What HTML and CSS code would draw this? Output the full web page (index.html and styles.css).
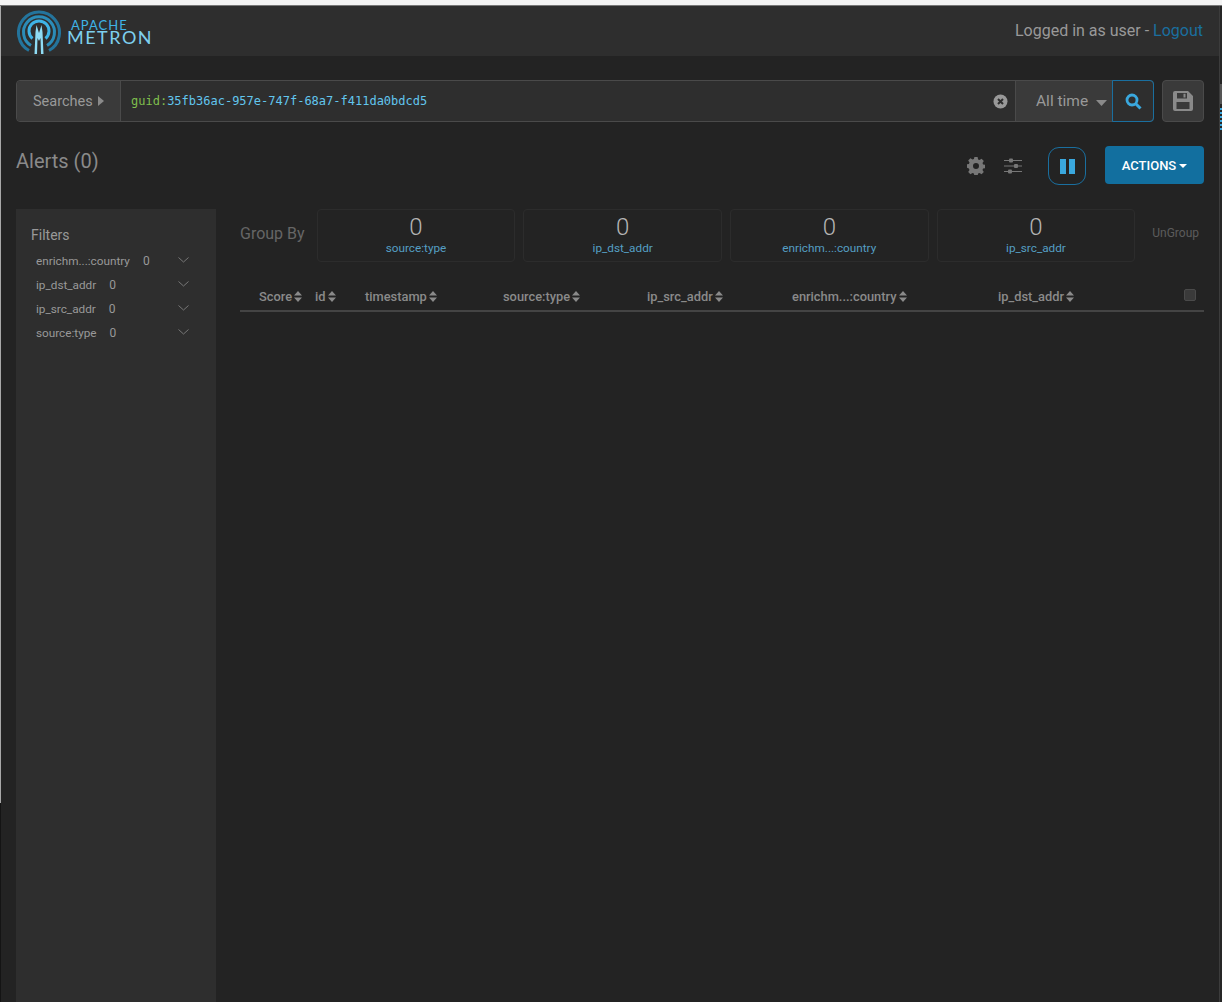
FILE: index.html
```html
<!DOCTYPE html>
<html lang="en">
<head>
<meta charset="utf-8">
<title>Apache Metron Alerts</title>
<link rel="stylesheet" href="styles.css">
</head>
<body>
<div class="chrome-top"></div>
<div class="edge-left"></div>
<div class="edge-right"><span class="edge-thumb"></span><span class="edge-dots"></span></div>
<header class="topbar">
  <div class="brand">
    <svg class="logo" width="46" height="46" viewBox="0 0 46 46" aria-hidden="true">
      <g fill="none" stroke-linecap="butt">
        <path d="M12 41.500A20.500 20.500 0 1 1 32 41.500" stroke="#24749c" stroke-width="3"/>
        <path d="M14 36.500A15.500 15.500 0 1 1 30 36.500" stroke="#2b8cb8" stroke-width="3"/>
        <path d="M15.500 29.500A10 10 0 1 1 28.500 29.500" stroke="#3fb4e6" stroke-width="3"/>
      </g>
      <path d="M17.500 45L18.500 23L19.500 16L22 24L24.500 16L25.500 23L26.500 45H24L23.500 29L22 32L20.500 29L20 45Z" fill="#8fdcf4"/>
    </svg>
    <div class="wordmark">
      <span class="apache">APACHE</span>
      <span class="metron">METRON</span>
    </div>
  </div>
  <div class="user">Logged in as user - <a class="logout">Logout</a></div>
</header>

<section class="search-row">
  <div class="search">
    <div class="searches">Searches <svg width="6" height="12" viewBox="0 0 6 12"><path d="M0 1l6 5-6 5z" fill="#8a8a8a"/></svg></div>
    <div class="query"><span class="q-key">guid:</span><span class="q-val">35fb36ac-957e-747f-68a7-f411da0bdcd5</span></div>
    <svg class="clear" width="15" height="15" viewBox="0 0 15 15"><circle cx="7.500" cy="7.500" r="7" fill="#999"/><path d="M5 5l5 5M10 5l-5 5" stroke="#2e2e2e" stroke-width="2"/></svg>
    <div class="time">All time <svg class="caret" width="11" height="6" viewBox="0 0 11 6"><path d="M0 0h11L5.500 6z" fill="#8a8a8a"/></svg></div>
    <div class="go">
      <svg width="17" height="17" viewBox="0 0 17 17"><circle cx="7" cy="7" r="5" fill="none" stroke="#3aa8de" stroke-width="2.800"/><path d="M10.500 10.500L15.500 15.500" stroke="#3aa8de" stroke-width="3"/></svg>
    </div>
  </div>
  <div class="save">
    <svg width="20" height="20" viewBox="0 0 20 20"><path fill-rule="evenodd" d="M2 0h13l5 5v13a2 2 0 0 1-2 2H2a2 2 0 0 1-2-2V2a2 2 0 0 1 2-2zM4 2v5.500h10V2zM10.500 2.800h2v3.800h-2zM3.500 11v7h13v-7z" fill="#8a8a8a"/></svg>
  </div>
</section>

<section class="title-row">
  <h1 class="title">Alerts (0)</h1>
  <div class="tools">
    <svg class="gear" width="18" height="18" viewBox="0 0 18 18"><path fill-rule="evenodd" d="M7.400 0h3.200l.5 2.400 1.400.6 2.100-1.300 2.200 2.200-1.300 2.100.6 1.400 2.400.5v3.200l-2.400.5-.6 1.400 1.300 2.100-2.200 2.200-2.100-1.300-1.400.6-.5 2.400H7.400l-.5-2.400-1.400-.6-2.100 1.300-2.200-2.200 1.300-2.100-.6-1.400L-.5 10.600V7.400l2.400-.5.600-1.400L1.200 3.400l2.200-2.200 2.100 1.300 1.400-.6zM9 6a3 3 0 1 0 0 6 3 3 0 0 0 0-6z" fill="#777"/></svg>
    <svg class="sliders" width="18" height="16" viewBox="0 0 18 16"><path d="M0 2.500h18M0 8h18M0 13.500h18" stroke="#777" stroke-width="1"/><rect x="5" y="0.500" width="4" height="4" rx="1" fill="#777"/><rect x="10" y="6" width="4" height="4" rx="1" fill="#777"/><rect x="4" y="11.500" width="4" height="4" rx="1" fill="#777"/></svg>
    <div class="pause"><span class="bar"></span><span class="bar"></span></div>
    <div class="actions">ACTIONS <span class="actions-caret"></span></div>
  </div>
</section>

<main class="main">
  <aside class="filters">
    <h2 class="filters-title">Filters</h2>
    <div class="filter"><span class="f-name">enrichm...:country</span><span class="f-count">0</span><svg class="chev" width="11" height="6" viewBox="0 0 11 6"><path d="M.5.500l5 4.500 5-4.500" fill="none" stroke="#777"/></svg></div>
    <div class="filter"><span class="f-name">ip_dst_addr</span><span class="f-count">0</span><svg class="chev" width="11" height="6" viewBox="0 0 11 6"><path d="M.5.500l5 4.500 5-4.500" fill="none" stroke="#777"/></svg></div>
    <div class="filter"><span class="f-name">ip_src_addr</span><span class="f-count">0</span><svg class="chev" width="11" height="6" viewBox="0 0 11 6"><path d="M.5.500l5 4.500 5-4.500" fill="none" stroke="#777"/></svg></div>
    <div class="filter"><span class="f-name">source:type</span><span class="f-count">0</span><svg class="chev" width="11" height="6" viewBox="0 0 11 6"><path d="M.5.500l5 4.500 5-4.500" fill="none" stroke="#777"/></svg></div>
  </aside>
  <div class="content">
    <div class="group-row">
      <div class="group-label">Group By</div>
      <div class="group-cards">
        <div class="card"><div class="card-num">0</div><div class="card-name">source:type</div></div>
        <div class="card"><div class="card-num">0</div><div class="card-name">ip_dst_addr</div></div>
        <div class="card"><div class="card-num">0</div><div class="card-name">enrichm...:country</div></div>
        <div class="card"><div class="card-num">0</div><div class="card-name">ip_src_addr</div></div>
      </div>
      <div class="ungroup">UnGroup</div>
    </div>
    <div class="table-head">
      <div class="th">Score <svg class="sort" width="8" height="11" viewBox="0 0 8 11"><path d="M0 4.500L4 0l4 4.500zM0 6.500h8L4 11z" fill="#8a8a8a"/></svg></div>
      <div class="th">id <svg class="sort" width="8" height="11" viewBox="0 0 8 11"><path d="M0 4.500L4 0l4 4.500zM0 6.500h8L4 11z" fill="#8a8a8a"/></svg></div>
      <div class="th">timestamp <svg class="sort" width="8" height="11" viewBox="0 0 8 11"><path d="M0 4.500L4 0l4 4.500zM0 6.500h8L4 11z" fill="#8a8a8a"/></svg></div>
      <div class="th">source:type <svg class="sort" width="8" height="11" viewBox="0 0 8 11"><path d="M0 4.500L4 0l4 4.500zM0 6.500h8L4 11z" fill="#8a8a8a"/></svg></div>
      <div class="th">ip_src_addr <svg class="sort" width="8" height="11" viewBox="0 0 8 11"><path d="M0 4.500L4 0l4 4.500zM0 6.500h8L4 11z" fill="#8a8a8a"/></svg></div>
      <div class="th">enrichm...:country <svg class="sort" width="8" height="11" viewBox="0 0 8 11"><path d="M0 4.500L4 0l4 4.500zM0 6.500h8L4 11z" fill="#8a8a8a"/></svg></div>
      <div class="th">ip_dst_addr <svg class="sort" width="8" height="11" viewBox="0 0 8 11"><path d="M0 4.500L4 0l4 4.500zM0 6.500h8L4 11z" fill="#8a8a8a"/></svg></div>
      <div class="check"></div>
    </div>
  </div>
</main>
</body>
</html>
```

FILE: styles.css
```css
* { box-sizing: border-box; }
html, body { height: 100%; }
body {
  margin: 0;
  height: 1002px;
  overflow: hidden;
  display: flex;
  flex-direction: column;
  background: #232323;
  color: #999;
  font-family: Roboto, "Liberation Sans", sans-serif;
}
.chrome-top { height: 6px; flex: none; background: #f3f3f3; border-bottom: 1px solid #777; }
.edge-left { position: absolute; left: 0; top: 6px; width: 1px; height: 996px; background: linear-gradient(#a8a8a8 0 797px, #141414 797px); }
.edge-right { position: absolute; right: 0; top: 6px; width: 3px; height: 996px; background: #262626; border-left: 1px solid #3c3c3c; }
.edge-thumb { display: block; margin-top: 78px; height: 20px; background: #555; }
.edge-dots { display: block; margin-top: 4px; height: 22px; background: repeating-linear-gradient(#3aa8de 0 2px, #262626 2px 4px); }

.topbar {
  flex: none;
  height: 50px;
  margin-right: 3px;
  padding: 0 16px 0 17px;
  display: flex;
  align-items: center;
  justify-content: space-between;
  background: #2e2e2e;
}
.brand { display: flex; align-items: center; gap: 4px; }
.logo { display: block; margin-top: 1px; }
.wordmark { display: flex; flex-direction: column; font-family: Lato, Roboto, sans-serif; line-height: 1; margin-top: 2px; }
.apache { font-size: 13px; font-weight: 400; letter-spacing: 1px; margin-left: 4px; color: #3fb4e6; height: 9px; }
.metron { font-size: 18px; font-weight: 400; letter-spacing: 1.500px; color: #7ed0ee; height: 18px; }
.user { font-size: 16px; color: #999; padding-bottom: 2px; }
.logout { color: #1a6f9f; }

.search-row {
  flex: none;
  margin: 24px 18px 0 16px;
  display: flex;
  justify-content: space-between;
  height: 42px;
}
.search {
  width: 1138px;
  display: flex;
  align-items: stretch;
  background: #2e2e2e;
  border: 1px solid #4a4a4a;
  border-radius: 4px;
}
.searches {
  width: 104px;
  flex: none;
  display: flex;
  align-items: center;
  gap: 5px;
  padding-left: 16px;
  font-size: 14.500px;
  color: #999;
  background: #3a3a3a;
  border-right: 1px solid #4a4a4a;
  border-radius: 4px 0 0 4px;
}
.query { flex: 1; display: flex; align-items: center; padding-left: 10px; font-family: "DejaVu Sans Mono", monospace; font-size: 12px; }
.q-key { color: #7fbf4d; }
.q-val { color: #62c6ee; }
.clear { align-self: center; margin-right: 7px; }
.time {
  width: 97px;
  flex: none;
  display: flex;
  align-items: center;
  padding: 0 0 1px 20px;
  font-size: 15.500px;
  color: #999;
  background: #3a3a3a;
  border-left: 1px solid #4a4a4a;
  white-space: pre;
}
.caret { margin-left: 4px; margin-top: 4px; }
.go {
  width: 42px;
  flex: none;
  margin: -1px -1px -1px 0;
  display: flex;
  align-items: center;
  justify-content: center;
  border: 1px solid #1a6f9f;
  border-radius: 0 4px 4px 0;
}
.save {
  width: 42px;
  display: flex;
  align-items: center;
  justify-content: center;
  background: #3a3a3a;
  border: 1px solid #4a4a4a;
  border-radius: 4px;
}

.title-row { flex: none; height: 87px; margin: 0 18px 0 16px; display: flex; justify-content: space-between; }
.title { margin: 27px 0 0; font-size: 20px; line-height: 24px; font-weight: 400; color: #8a8a8a; }
.tools { margin-top: 24px; height: 39px; display: flex; align-items: flex-start; }
.gear { margin: 11px 19px 0 0; }
.sliders { margin: 12px 26px 0 0; }
.pause {
  width: 38px;
  height: 38px;
  margin-top: 1px;
  margin-right: 19px;
  display: flex;
  align-items: center;
  justify-content: center;
  gap: 3px;
  border: 1px solid #1a6f9f;
  border-radius: 11px;
}
.bar { width: 6px; height: 15px; background: #3aa8de; }
.actions {
  width: 99px;
  height: 38px;
  display: flex;
  align-items: center;
  justify-content: center;
  gap: 3px;
  font-size: 13px;
  font-weight: 500;
  color: #fff;
  background: #126f9f;
  border-radius: 4px;
}
.actions-caret { width: 0; height: 0; border-left: 4px solid transparent; border-right: 4px solid transparent; border-top: 4px solid #fff; margin-top: 2px; }

.main { flex: 1; display: flex; margin: 0 18px 0 16px; gap: 24px; min-height: 0; }
.filters { width: 200px; flex: none; background: #2e2e2e; padding: 17px 15px 0; }
.filters-title { margin: 0 0 5px; font-size: 14px; line-height: 18px; font-weight: 400; color: #999; }
.filter { position: relative; height: 24px; margin-left: 5px; display: flex; align-items: center; gap: 13px; font-size: 11.750px; color: #999; }
.f-count { font-size: 12px; }
.chev { position: absolute; right: 12px; top: 8px; }

.content { flex: 1; min-width: 0; }
.group-row { height: 53px; display: flex; }
.group-label { width: 76.700px; flex: none; padding-top: 16px; font-size: 16px; line-height: 18px; color: #666; }
.group-cards { display: flex; gap: 8px; }
.card { width: 198.650px; text-align: center; border: 1px solid #2c2c2c; border-radius: 4px; padding-top: 4px; }
.card-num { font-size: 24px; line-height: 26px; font-weight: 300; color: #b5b5b5; }
.card-name { font-size: 11.750px; line-height: 16px; color: #559fc4; }
.ungroup { margin-left: 17px; padding-top: 17px; font-size: 12px; line-height: 14px; color: #5c5c5c; }

.table-head {
  margin-top: 23px;
  height: 27px;
  display: grid;
  grid-template-columns: 56px 50px 138px 144px 145px 206px 1fr 20px;
  padding: 0 0 2px 19px;
  align-items: center;
  border-bottom: 2px solid #444;
}
.th { font-size: 12.850px; font-weight: 500; color: #8a8a8a; white-space: nowrap; }
.sort { vertical-align: -1px; margin-left: -1px; }
.check { width: 12px; height: 12px; background: #3a3a3a; border: 1px solid #4a4a4a; border-radius: 2px; justify-self: start; margin-top: -3px; }
```
